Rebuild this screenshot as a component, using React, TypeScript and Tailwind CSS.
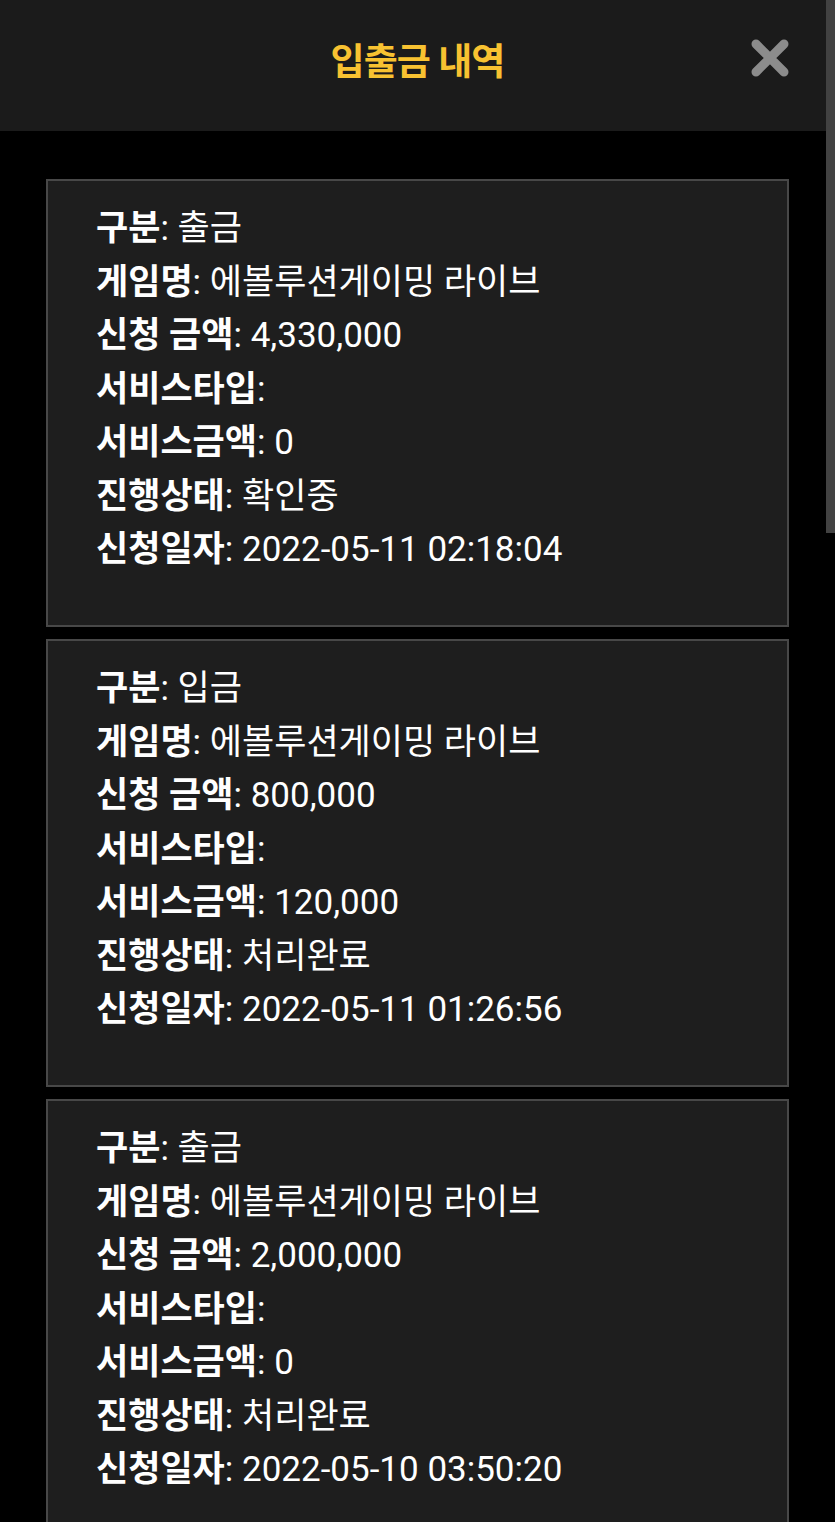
import { useState } from 'react'

type Row = {
  kind: string
  game: string
  amount: string
  serviceType: string
  serviceAmount: string
  status: string
  date: string
}

const rows: Row[] = [
  { kind: '출금', game: '에볼루션게이밍 라이브', amount: '4,330,000', serviceType: '', serviceAmount: '0', status: '확인중', date: '2022-05-11 02:18:04' },
  { kind: '입금', game: '에볼루션게이밍 라이브', amount: '800,000', serviceType: '', serviceAmount: '120,000', status: '처리완료', date: '2022-05-11 01:26:56' },
  { kind: '출금', game: '에볼루션게이밍 라이브', amount: '2,000,000', serviceType: '', serviceAmount: '0', status: '처리완료', date: '2022-05-10 03:50:20' },
]

function Line({ label, value }: { label: string; value: string }) {
  return (
    <p className="leading-[53.5px] whitespace-nowrap">
      <span className="font-bold">{label}</span>: {value}
    </p>
  )
}

export default function App() {
  const [open, setOpen] = useState(true)

  return (
    <div
      className="relative h-screen overflow-hidden bg-black text-white"
      style={{ fontFamily: 'Roboto, "Noto Sans CJK KR", sans-serif' }}
    >
      {/* Header */}
      <header className="h-[131px] bg-[#1b1b1b] flex items-center justify-center relative">
        <h1 className="text-[37px] font-bold text-[#f8c231] -mt-[6px] tracking-tight">
          입출금 내역
        </h1>
        <button
          onClick={() => setOpen(!open)}
          className="absolute right-[45px] top-[38px] w-10 h-10"
          aria-label="close"
        >
          <svg viewBox="0 0 40 40" className="w-10 h-10">
            <path d="M6 6 L34 34 M34 6 L6 34" stroke="#8c8c8c" strokeWidth="9" strokeLinecap="round" fill="none" />
          </svg>
        </button>
      </header>

      {/* List */}
      <main className="px-[46px] pt-[48px] flex flex-col gap-[12.5px]">
        {rows.map((r, i) => (
          <div
            key={i}
            className="border-2 border-[#484848] bg-[#1e1e1e] pl-[48px] pt-[21px] pb-[48px] text-[35px]"
          >
            <Line label="구분" value={r.kind} />
            <Line label="게임명" value={r.game} />
            <Line label="신청 금액" value={r.amount} />
            <Line label="서비스타입" value={r.serviceType} />
            <Line label="서비스금액" value={r.serviceAmount} />
            <Line label="진행상태" value={r.status} />
            <Line label="신청일자" value={r.date} />
          </div>
        ))}
      </main>

      {/* Scrollbar */}
      <div className="absolute right-0 top-0 w-[9px] h-[533px] bg-[#424242]" />
    </div>
  )
}
